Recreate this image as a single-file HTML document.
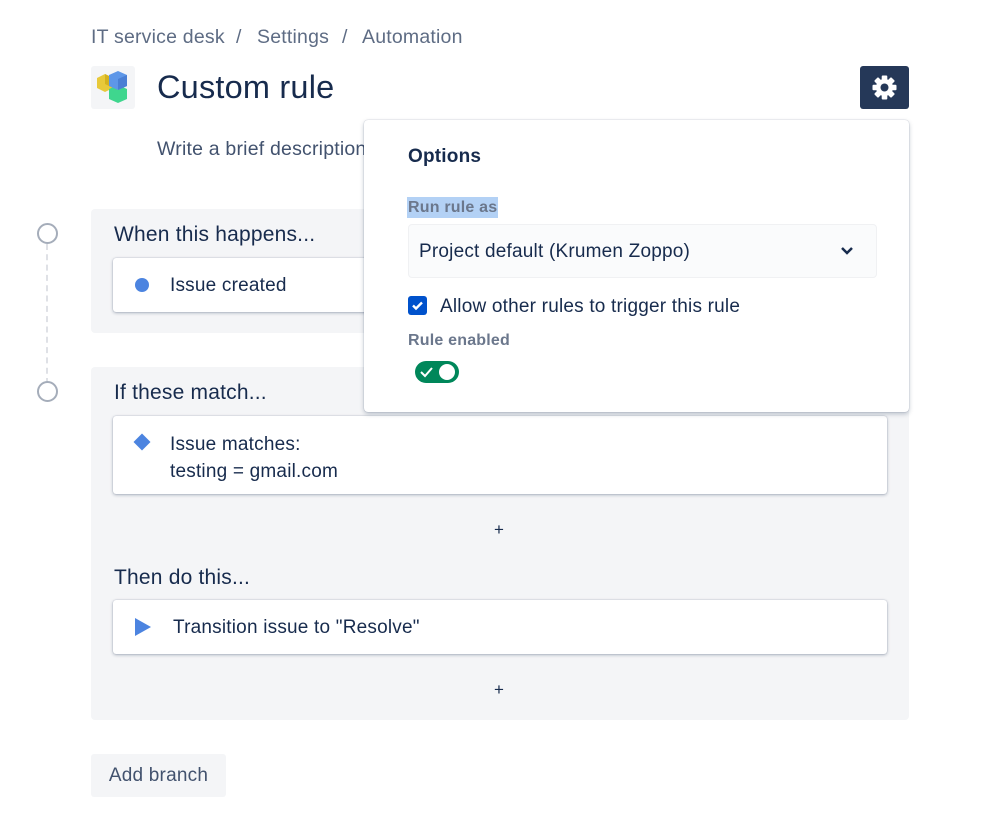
<!DOCTYPE html>
<html><head><style>
body{margin:0;width:999px;height:819px;background:#fff;font-family:"Liberation Sans",sans-serif;color:#172b4d;position:relative;overflow:hidden;letter-spacing:0.2px}
.a{position:absolute}
.sec{position:absolute;left:91px;width:818px;background:#f4f5f7;border-radius:4px}
.card{position:absolute;left:113px;width:774px;background:#fff;border-radius:3px;box-shadow:0 1px 3px rgba(9,30,66,.3),0 0 1px rgba(9,30,66,.3);font-size:19px}
.h{font-size:21px;position:absolute;left:114px}
.circ{position:absolute;left:37px;width:17px;height:17px;border:2.5px solid #a5adba;border-radius:50%;background:#fff}
.bc{position:absolute;top:26px;font-size:19.5px;color:#5e6c84}
</style></head><body>
<div class="bc" style="left:91px">IT service desk</div>
<div class="bc" style="left:236px">/</div>
<div class="bc" style="left:257px">Settings</div>
<div class="bc" style="left:342px">/</div>
<div class="bc" style="left:362px">Automation</div>
<div class="a" style="left:91px;top:66px;width:44px;height:43px;background:#f4f5f7;border-radius:3px">
<svg width="44" height="43" viewBox="0 0 44 43"><path d="M6 12l8-4 8 4v10l-8 4-8-4z" fill="#e8c93a"/><path d="M14 8l8 4v10l-8-4z" fill="#d4b21f"/><path d="M18 23l9-4 9 4v10l-9 4-9-4z" fill="#3fd68e"/><path d="M18 9l9-4 9 4v11l-9 4-9-4z" fill="#5e97e8"/><path d="M27 13l9-4v11l-9 4z" fill="#4a7fd4"/></svg></div>
<div class="a" style="left:157px;top:69px;font-size:32.5px;color:#172b4d">Custom rule</div>
<div class="a" style="left:157px;top:138px;font-size:19.5px;color:#42526e">Write a brief description</div>
<div class="a" style="left:860px;top:66px;width:49px;height:43px;background:#253858;border-radius:3px">
<svg width="49" height="43" viewBox="0 0 49 43"><g transform="translate(24.5 21.5)" fill="#fff"><g id="t"><rect x="-2.8" y="-12" width="5.6" height="5" rx="1"/></g><use href="#t" transform="rotate(45)"/><use href="#t" transform="rotate(90)"/><use href="#t" transform="rotate(135)"/><use href="#t" transform="rotate(180)"/><use href="#t" transform="rotate(225)"/><use href="#t" transform="rotate(270)"/><use href="#t" transform="rotate(315)"/><circle r="8.5"/><circle r="4" fill="#253858"/></g></svg></div>

<div class="a" style="left:46px;top:244px;height:140px;border-left:2px dashed #dfe1e6"></div>
<div class="circ" style="top:223px"></div>
<div class="circ" style="top:381px"></div>

<div class="sec" style="top:209px;height:124px"></div>
<div class="h" style="top:223px">When this happens...</div>
<div class="card" style="top:258px;height:54px"><div class="a" style="left:22px;top:20px;width:14px;height:14px;border-radius:50%;background:#4c84e0"></div><div class="a" style="left:57px;top:17px">Issue created</div></div>

<div class="sec" style="top:367px;height:353px"></div>
<div class="h" style="top:381px">If these match...</div>
<div class="card" style="top:416px;height:78px"><div class="a" style="left:23px;top:20px;width:12px;height:12px;background:#4c84e0;transform:rotate(45deg)"></div><div class="a" style="left:57px;top:15px;line-height:27px">Issue matches:<br>testing = gmail.com</div></div>
<div class="a" style="left:494px;top:520px;font-size:17px">+</div>
<div class="h" style="top:566px">Then do this...</div>
<div class="card" style="top:600px;height:54px"><svg class="a" style="left:21px;top:18px" width="18" height="18"><path d="M1 0L17 9L1 18z" fill="#4c84e0"/></svg><div class="a" style="left:60px;top:17px">Transition issue to "Resolve"</div></div>
<div class="a" style="left:494px;top:680px;font-size:17px">+</div>

<div class="a" style="left:91px;top:754px;width:135px;height:43px;background:#f4f5f7;border-radius:3px;font-size:19px;color:#42526e;line-height:43px;text-align:center">Add branch</div>

<div class="a" style="left:364px;top:120px;width:545px;height:292px;background:#fff;border-radius:4px;box-shadow:0 2px 5px rgba(9,30,66,.25),0 0 1px rgba(9,30,66,.35)">
<div class="a" style="left:44px;top:26px;font-size:19px;font-weight:bold">Options</div>
<div class="a" style="left:43px;top:77px;height:21px;padding:0 1px;background:#b3d1f5;font-size:16px;font-weight:bold;color:#6b778c;line-height:21px">Run rule as</div>
<div class="a" style="left:44px;top:104px;width:467px;height:52px;background:#fafbfc;border:1px solid #f0f1f3;border-radius:4px"><div class="a" style="left:10px;top:16px;font-size:19px">Project default (Krumen Zoppo)</div><svg class="a" style="left:431px;top:21px" width="14" height="10"><path d="M2 2l5 5 5-5" stroke="#172b4d" stroke-width="2.5" fill="none"/></svg></div>
<div class="a" style="left:44px;top:176px;width:19px;height:19px;background:#0052cc;border-radius:3px"><svg width="19" height="19"><path d="M5 9.5l3 3 6-6" stroke="#fff" stroke-width="2.4" fill="none"/></svg></div>
<div class="a" style="left:76px;top:176px;font-size:19px">Allow other rules to trigger this rule</div>
<div class="a" style="left:44px;top:212px;font-size:16px;font-weight:bold;color:#6b778c">Rule enabled</div>
<div class="a" style="left:51px;top:241px;width:44px;height:22px;background:#00875a;border-radius:11px"><svg class="a" style="left:5px;top:5px" width="14" height="12"><path d="M1 6l4 4 7-8" stroke="#fff" stroke-width="2" fill="none"/></svg><div class="a" style="left:24px;top:3px;width:16px;height:16px;background:#fff;border-radius:50%"></div></div>
</div>
</body></html>
